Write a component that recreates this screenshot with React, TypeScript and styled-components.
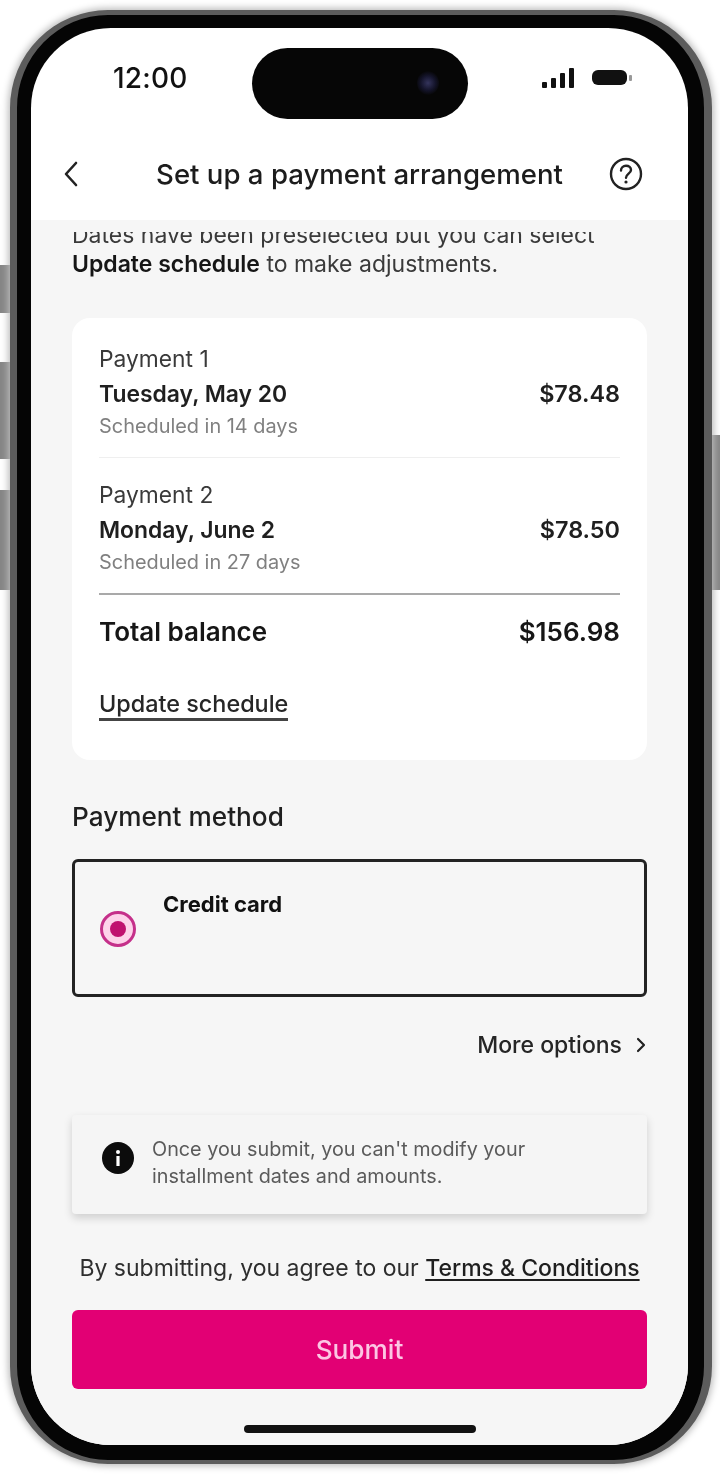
import React from "react";
import styled, { createGlobalStyle } from "styled-components";

const GlobalStyle = createGlobalStyle`
  html, body {
    margin: 0;
    padding: 0;
    background: #fff;
  }
  body {
    font-family: "Inter", "Liberation Sans", sans-serif;
    color: #1f1f1f;
  }
`;

interface PaymentItem {
  label: string;
  date: string;
  note: string;
  amount: string;
}

const payments: PaymentItem[] = [
  {
    label: "Payment 1",
    date: "Tuesday, May 20",
    note: "Scheduled in 14 days",
    amount: "$78.48",
  },
  {
    label: "Payment 2",
    date: "Monday, June 2",
    note: "Scheduled in 27 days",
    amount: "$78.50",
  },
];

const App: React.FC = () => {
  return (
    <Stage>
      <GlobalStyle />
      <SideButton $side="left" $top={265} $height={48} />
      <SideButton $side="left" $top={362} $height={97} />
      <SideButton $side="left" $top={490} $height={100} />
      <SideButton $side="right" $top={435} $height={155} />
      <Phone>
        <Screen>
          <Island>
            <Lens />
          </Island>
          <StatusBar>
            <Clock>12:00</Clock>
            <StatusIcons>
              <svg width="34" height="22" viewBox="0 0 34 22">
                <rect x="0" y="15" width="5" height="6" rx="1" fill="#111" />
                <rect x="9" y="11" width="5" height="10" rx="1" fill="#111" />
                <rect x="18" y="6" width="5" height="15" rx="1" fill="#111" />
                <rect x="27" y="1" width="5" height="20" rx="1" fill="#111" />
              </svg>
              <svg width="41" height="16" viewBox="0 0 41 16">
                <rect x="0" y="0" width="35" height="15" rx="6" fill="#111" />
                <rect x="37" y="5" width="3" height="6" rx="1" fill="#999" />
              </svg>
            </StatusIcons>
          </StatusBar>
          <Header>
            <svg width="20" height="28" viewBox="0 0 20 28" fill="none">
              <path
                d="M15 3 L5 14 L15 25"
                stroke="#222"
                strokeWidth="2.6"
                strokeLinecap="round"
                strokeLinejoin="round"
              />
            </svg>
            <HeaderTitle>Set up a payment arrangement</HeaderTitle>
            <svg width="34" height="34" viewBox="0 0 34 34" fill="none">
              <circle cx="17" cy="17" r="15" stroke="#222" strokeWidth="2.4" />
              <path
                d="M12 13.5 C12 10.5 14.2 8.8 17 8.8 C20 8.8 22 10.6 22 13 C22 16.6 17 16.8 17 20.8"
                stroke="#222"
                strokeWidth="2.4"
                strokeLinecap="round"
              />
              <circle cx="17" cy="25" r="1.6" fill="#222" />
            </svg>
          </Header>
          <Content>
            <Scroll>
              <Intro>
                Dates have been preselected but you can select
                <br />
                <strong>Update schedule</strong> to make adjustments.
              </Intro>
              <Card>
                {payments.map((item, index) => (
                  <PaymentRow key={item.label} $divider={index === 0}>
                    <div>
                      <PaymentLabel>{item.label}</PaymentLabel>
                      <PaymentDate>{item.date}</PaymentDate>
                      <PaymentNote>{item.note}</PaymentNote>
                    </div>
                    <PaymentAmount>{item.amount}</PaymentAmount>
                  </PaymentRow>
                ))}
                <TotalRow>
                  <span>Total balance</span>
                  <span>$156.98</span>
                </TotalRow>
                <UpdateLink>Update schedule</UpdateLink>
              </Card>
              <SectionTitle>Payment method</SectionTitle>
              <MethodBox>
                <Radio>
                  <RadioDot />
                </Radio>
                <MethodName>Credit card</MethodName>
              </MethodBox>
              <MoreRow>
                <span>More options</span>
                <svg width="12" height="18" viewBox="0 0 12 18" fill="none">
                  <path
                    d="M3 3 L9 9 L3 15"
                    stroke="#222"
                    strokeWidth="2.2"
                    strokeLinecap="round"
                    strokeLinejoin="round"
                  />
                </svg>
              </MoreRow>
              <Notice>
                <svg width="32" height="32" viewBox="0 0 32 32">
                  <circle cx="16" cy="16" r="16" fill="#0c0c0c" />
                  <circle cx="16" cy="10" r="2" fill="#fff" />
                  <rect x="14.4" y="14" width="3.2" height="10" fill="#fff" />
                </svg>
                <NoticeText>
                  Once you submit, you can't modify your installment dates and
                  amounts.
                </NoticeText>
              </Notice>
              <Terms>
                By submitting, you agree to our <u>Terms &amp; Conditions</u>
              </Terms>
              <SubmitButton>Submit</SubmitButton>
            </Scroll>
            <HomeBar />
          </Content>
        </Screen>
      </Phone>
    </Stage>
  );
};

const Stage = styled.div`
  position: relative;
  width: 720px;
  height: 1474px;
  overflow: hidden;
  padding: 10px 8px 10px 10px;
  box-sizing: border-box;
  filter: blur(0.6px);
`;

const SideButton = styled.div<{
  $side: "left" | "right";
  $top: number;
  $height: number;
}>`
  position: absolute;
  ${(p) => p.$side}: 0;
  top: ${(p) => p.$top}px;
  height: ${(p) => p.$height}px;
  width: 14px;
  background: #858585;
`;

const Phone = styled.div`
  position: relative;
  height: 100%;
  box-sizing: border-box;
  padding: 13px 16px 15px 14px;
  background: #050505;
  border-style: solid;
  border-color: #5c5c5c;
  border-width: 5px 8px 4px 7px;
  border-radius: 98px;
  box-shadow: 0 0 7px 2px #bdbdbd;
`;

const Screen = styled.div`
  position: relative;
  height: 100%;
  display: flex;
  flex-direction: column;
  overflow: hidden;
  background: #fff;
  border-radius: 80px;
`;

const Island = styled.div`
  position: absolute;
  top: 20px;
  left: 221px;
  width: 216px;
  height: 71px;
  border-radius: 36px;
  background: #060606;
`;

const Lens = styled.div`
  position: absolute;
  top: 23px;
  left: 165px;
  width: 22px;
  height: 24px;
  border-radius: 50%;
  background: radial-gradient(circle, #34345c 0%, #14142a 45%, #060606 75%);
`;

const StatusBar = styled.div`
  height: 102px;
  flex-shrink: 0;
  display: flex;
  justify-content: space-between;
  align-items: flex-start;
  padding: 33px 55px 0 82px;
  box-sizing: border-box;
`;

const Clock = styled.div`
  font-size: 28px;
  line-height: 34px;
  font-weight: 500;
  color: #111;
  letter-spacing: 0.2px;
`;

const StatusIcons = styled.div`
  display: flex;
  align-items: center;
  gap: 16px;
  height: 34px;
`;

const Header = styled.div`
  height: 90px;
  flex-shrink: 0;
  display: grid;
  grid-template-columns: 1fr auto 1fr;
  align-items: center;
  padding: 0 30px 2px;
  box-sizing: border-box;

  svg:last-child {
    justify-self: end;
    margin-right: 15px;
  }
`;

const HeaderTitle = styled.div`
  font-size: 27.6px;
  font-weight: 500;
  color: #1c1c1c;
  white-space: nowrap;
`;

const Content = styled.div`
  flex: 1;
  min-height: 0;
  display: flex;
  flex-direction: column;
  background: #f6f6f6;
  padding-top: 12px;
`;

const Scroll = styled.div`
  flex: 1;
  min-height: 0;
  overflow: hidden;
  padding: 0 41px;
`;

const Intro = styled.div`
  margin-top: -11px;
  font-size: 23px;
  line-height: 29px;
  color: #3a3a3a;
  white-space: nowrap;

  strong {
    font-weight: 600;
    color: #161616;
  }
`;

const Card = styled.div`
  margin-top: 39px;
  height: 442px;
  box-sizing: border-box;
  padding: 26px 27px 0;
  background: #fff;
  border-radius: 18px;
`;

const PaymentRow = styled.div<{ $divider: boolean }>`
  display: flex;
  justify-content: space-between;
  align-items: flex-start;
  height: 113px;
  margin-bottom: ${(p) => (p.$divider ? "22px" : "0")};
  border-bottom: ${(p) => (p.$divider ? "1px solid #efefef" : "2px solid #a9a9a9")};
`;

const PaymentLabel = styled.div`
  font-size: 22.8px;
  line-height: 30px;
  color: #3a3a3a;
`;

const PaymentDate = styled.div`
  margin-top: 5px;
  font-size: 22.9px;
  line-height: 30px;
  font-weight: 600;
  color: #1f1f1f;
`;

const PaymentNote = styled.div`
  margin-top: 3px;
  font-size: 19.9px;
  line-height: 28px;
  color: #808080;
`;

const PaymentAmount = styled.div`
  margin-top: 35px;
  font-size: 23.4px;
  line-height: 30px;
  font-weight: 600;
  color: #1f1f1f;
`;

const TotalRow = styled.div`
  display: flex;
  justify-content: space-between;
  margin-top: 20px;
  font-size: 26px;
  line-height: 34px;
  font-weight: 600;
  color: #161616;
`;

const UpdateLink = styled.div`
  display: inline-block;
  margin-top: 40px;
  font-size: 23.4px;
  line-height: 29px;
  font-weight: 500;
  color: #262626;
  border-bottom: 3px solid #444;
`;

const SectionTitle = styled.div`
  margin-top: 40px;
  font-size: 26.2px;
  line-height: 34px;
  font-weight: 500;
  color: #1f1f1f;
`;

const MethodBox = styled.div`
  margin-top: 25px;
  height: 138px;
  box-sizing: border-box;
  display: flex;
  align-items: flex-start;
  gap: 27px;
  padding: 28px 25px 0;
  border: 3px solid #232323;
  border-radius: 6px;
`;

const Radio = styled.div`
  width: 36px;
  height: 36px;
  margin-top: 21px;
  flex-shrink: 0;
  box-sizing: border-box;
  display: flex;
  align-items: center;
  justify-content: center;
  border: 3px solid #c5308a;
  border-radius: 50%;
  background: #fdd3ea;
`;

const RadioDot = styled.div`
  width: 16px;
  height: 16px;
  border-radius: 50%;
  background: #c0116f;
`;

const MethodName = styled.div`
  font-size: 22px;
  line-height: 28px;
  font-weight: 700;
  color: #111;
`;

const MoreRow = styled.div`
  margin-top: 33px;
  display: flex;
  align-items: center;
  justify-content: flex-end;
  gap: 13px;
  font-size: 23px;
  line-height: 30px;
  font-weight: 500;
  color: #262626;
`;

const Notice = styled.div`
  margin-top: 55px;
  height: 99px;
  box-sizing: border-box;
  display: flex;
  align-items: flex-start;
  gap: 18px;
  padding: 21px 30px 0;
  background: #f5f5f5;
  box-shadow: 0 4px 8px rgba(0, 0, 0, 0.16);
  border-radius: 4px;

  svg {
    flex-shrink: 0;
    margin-top: 6px;
  }
`;

const NoticeText = styled.div`
  width: 420px;
  font-size: 19.8px;
  line-height: 27px;
  color: #5a5a5a;
`;

const Terms = styled.div`
  margin-top: 37px;
  text-align: center;
  font-size: 23px;
  line-height: 34px;
  color: #2e2e2e;
  white-space: nowrap;

  u {
    font-weight: 500;
    color: #1f1f1f;
    text-decoration-thickness: 2px;
    text-underline-offset: 3px;
  }
`;

const SubmitButton = styled.div`
  margin-top: 25px;
  height: 79px;
  display: flex;
  align-items: center;
  justify-content: center;
  background: #e20074;
  border-radius: 6px;
  font-size: 26.2px;
  font-weight: 500;
  color: #fcc6e4;
`;

const HomeBar = styled.div`
  width: 232px;
  height: 8px;
  flex-shrink: 0;
  margin: 0 auto 12px;
  border-radius: 4px;
  background: #111;
`;

export default App;
